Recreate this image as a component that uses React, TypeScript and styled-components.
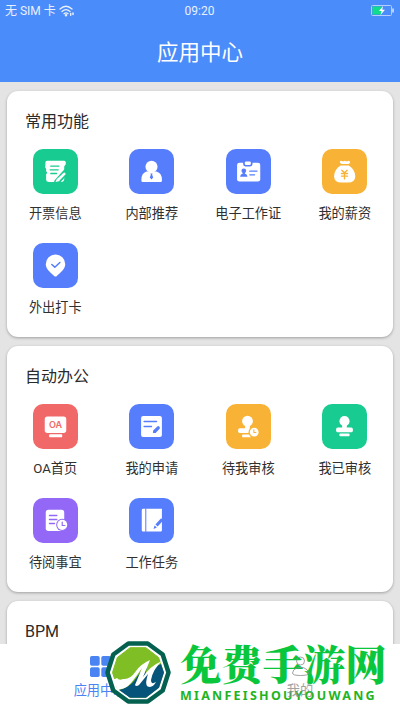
import React from 'react';
import styled, { createGlobalStyle } from 'styled-components';

const blue = '#567dfb';
const green = '#18cb90';
const orange = '#f8b336';
const red = '#f16868';
const purple = '#9468f7';

const GlobalStyle = createGlobalStyle`
  * {
    box-sizing: border-box;
  }
  body {
    margin: 0;
    background: #e4e4e4;
    font-family: Roboto, "Noto Sans CJK SC", sans-serif;
    color: #303030;
  }
`;

const Page = styled.div`
  position: relative;
  display: flex;
  flex-direction: column;
  height: 711px;
  overflow: hidden;
`;

const Header = styled.header`
  flex: none;
  height: 82px;
  background: #4a8cf9;
  color: #fff;
`;

const StatusBar = styled.div`
  display: grid;
  grid-template-columns: 1fr auto 1fr;
  align-items: center;
  height: 22px;
  padding: 0 6px 0 5px;
  font-size: 12px;
  line-height: 22px;
  color: #e8f0ff;
`;

const Carrier = styled.div`
  display: flex;
  align-items: center;
  gap: 3px;
  white-space: nowrap;
`;

const Battery = styled.svg`
  justify-self: end;
  margin-bottom: 2px;
`;

const HeaderTitle = styled.h1`
  margin: 0;
  padding-top: 1px;
  font-size: 21.5px;
  font-weight: 400;
  line-height: 60px;
  text-align: center;
`;

const Content = styled.main`
  flex: 1;
  min-height: 0;
  display: flex;
  flex-direction: column;
  gap: 9px;
  padding: 9px 7px 0;
  overflow: hidden;
`;

const Card = styled.section`
  flex: none;
  height: 246px;
  border-radius: 11px;
  background: #fff;
  box-shadow: 0 1px 3px rgba(0, 0, 0, 0.3);
`;

const CardTitle = styled.h2`
  margin: 0;
  padding: 19px 18px 0;
  font-size: 16px;
  font-weight: 400;
  line-height: 24px;
  color: #2b2b2b;
`;

const Grid = styled.div`
  display: grid;
  grid-template-columns: repeat(4, 1fr);
  grid-auto-rows: 94px;
  padding-top: 15px;
`;

const Item = styled.div`
  display: flex;
  flex-direction: column;
  align-items: center;
`;

const Tile = styled.div<{ $color: string }>`
  width: 45px;
  height: 45px;
  border-radius: 10px;
  background: ${(props) => props.$color};
  color: ${(props) => props.$color};

  svg {
    display: block;
    width: 100%;
    height: 100%;
  }
`;

const Label = styled.span`
  margin-top: 9px;
  font-size: 13.2px;
  line-height: 21px;
  white-space: nowrap;
`;

const TabBar = styled.nav`
  flex: none;
  display: grid;
  grid-template-columns: 1fr 1fr;
  height: 67px;
  background: #fff;
`;

const Tab = styled.div<{ $active?: boolean }>`
  display: flex;
  flex-direction: column;
  align-items: center;
  padding-top: 12px;
  font-size: 13.2px;
  line-height: 20px;
  color: ${(props) => (props.$active ? '#4a84f3' : '#8c8c8c')};
  z-index: ${(props) => (props.$active ? 0 : 2)};
  opacity: ${(props) => (props.$active ? 1 : 0.8)};

  svg {
    display: block;
    margin-bottom: 4px;
  }
`;

const Stamp = styled.div`
  position: absolute;
  left: 104px;
  bottom: 5px;
  z-index: 1;
  display: flex;
  align-items: center;
  gap: 8px;
`;

const StampText = styled.div`
  display: flex;
  flex-direction: column;
  color: #0ac63c;
  white-space: nowrap;
`;

const StampName = styled.span`
  font-family: "Noto Serif CJK SC", "Noto Sans CJK SC", serif;
  font-size: 41.3px;
  font-weight: 900;
  line-height: 44px;
  margin-top: -3px;
`;

const StampUrl = styled.span`
  padding: 4px 0 0 0;
  font-family: "Noto Sans", sans-serif;
  font-size: 12.5px;
  font-weight: 700;
  line-height: 16px;
  letter-spacing: 2.25px;
  color: #22b422;
`;

type GlyphProps = { children: React.ReactNode };

// white shapes on the tile, currentColor is the tile colour for cut-outs
const Glyph = ({ children }: GlyphProps) => (
  <svg viewBox="0 0 134 134" fill="#fff" strokeLinecap="round" strokeLinejoin="round">
    {children}
  </svg>
);

const InvoiceIcon = () => (
  <Glyph>
    <path d="M42 35H93Q98 36 98 42Q98 48 93 51V90Q92 98 84 98H48Q39 98 39 90V75Q45 71 39 66V59Q34 54 37 49V40Q37 35 42 35Z" />
    <path d="M53 51H77M51 62H75M53 73H70" stroke="currentColor" strokeWidth="4" fill="none" />
    <path d="M98 68L72 97" stroke="currentColor" strokeWidth="17" fill="none" />
    <path d="M93 74L76 91" stroke="#fff" strokeWidth="8" fill="none" />
    <path d="M67 98L72 87L80 95Z" />
  </Glyph>
);

const PersonIcon = () => (
  <Glyph>
    <circle cx="67" cy="53" r="18" />
    <path d="M52 67H82Q98 72 98 91V95Q98 98 94 98H41Q37 98 37 95V91Q37 72 52 67Z" />
    <path d="M64 73H70L69 77L72 85L67 91L62 85L65 77Z" fill="currentColor" />
  </Glyph>
);

const BadgeIcon = () => (
  <Glyph>
    <rect x="33" y="41" width="69" height="56" rx="7" />
    <path d="M51 36V45Q51 52 58 52H72Q79 52 79 45V36Z" fill="currentColor" />
    <rect x="56" y="37" width="18" height="11" rx="4" />
    <circle cx="53" cy="65" r="7" fill="currentColor" />
    <path d="M50 67H56V73Q64 75 64 83H42Q42 75 50 73Z" fill="currentColor" />
    <path d="M71 66H92M71 77H85" stroke="currentColor" strokeWidth="4" />
  </Glyph>
);

const MoneyIcon = () => (
  <Glyph>
    <path d="M57 35Q62 38 67 35Q74 38 80 35Q84 36 84 41Q82 45 76 45H59Q53 44 53 39Q54 35 57 35Z" />
    <path d="M55 49H80Q99 62 99 81Q99 100 77 100H58Q36 100 36 81Q36 62 55 49Z" />
    <path d="M59 63L67 71L75 63M67 71V89M58 73H76M58 81H76" stroke="currentColor" strokeWidth="4" fill="none" />
  </Glyph>
);

const PinIcon = () => (
  <Glyph>
    <path d="M67 34A29 29 0 0 1 96 63C96 76 83 87 71 98Q67 102 63 98C51 87 38 76 38 63A29 29 0 0 1 67 34Z" />
    <path d="M56 64L65 72L80 58" stroke="currentColor" strokeWidth="4.5" fill="none" />
  </Glyph>
);

const OaIcon = () => (
  <Glyph>
    <rect x="35" y="37" width="64" height="49" rx="8" />
    <rect x="48" y="90" width="39" height="9" rx="2" />
    <text
      x="67"
      y="71"
      textAnchor="middle"
      fontFamily="Inter, sans-serif"
      fontSize="27"
      fontWeight="600"
      fill="currentColor"
    >
      OA
    </text>
  </Glyph>
);

const ApplyIcon = () => (
  <Glyph>
    <rect x="36" y="36" width="62" height="62" rx="6" />
    <path d="M45 52H82M45 67H67" stroke="currentColor" strokeWidth="4" />
    <path d="M87 71L77 81" stroke="currentColor" strokeWidth="10" />
    <path d="M71 87L73 78L80 85Z" fill="currentColor" />
  </Glyph>
);

const PendingIcon = () => (
  <Glyph>
    <circle cx="64" cy="51" r="16" />
    <path d="M57 60H71V72H86V86H40Q36 86 36 82V77Q36 72 41 72H57Z" />
    <rect x="48" y="91" width="28" height="8" rx="2" />
    <circle cx="84" cy="84" r="17" fill="currentColor" />
    <circle cx="84" cy="84" r="13" />
    <path d="M83 77V85H89" stroke="currentColor" strokeWidth="3" fill="none" />
  </Glyph>
);

const ReviewedIcon = () => (
  <Glyph>
    <circle cx="67" cy="51" r="15" />
    <path d="M60 60H74V70H87Q92 70 92 75V80Q92 84 88 84H46Q42 84 42 80V75Q42 70 47 70H60Z" />
    <rect x="52" y="88" width="30" height="8" rx="2" />
  </Glyph>
);

const ReadingIcon = () => (
  <Glyph>
    <rect x="38" y="35" width="55" height="63" rx="8" />
    <path d="M49 52H71M49 64H71M49 76H64" stroke="currentColor" strokeWidth="4" />
    <circle cx="87" cy="80" r="18" fill="currentColor" />
    <circle cx="87" cy="80" r="15" />
    <path d="M87 72V82H95" stroke="currentColor" strokeWidth="3.5" fill="none" />
  </Glyph>
);

const TaskIcon = () => (
  <Glyph>
    <path d="M42 32H98V97Q98 100 94 100H42Q38 100 38 96V36Q38 32 42 32Z" />
    <path d="M50 32V100" stroke="currentColor" strokeWidth="3" />
    <path d="M99 63L82 82" stroke="currentColor" strokeWidth="9" strokeLinecap="butt" />
    <path d="M73 92L76 82L83 88Z" fill="currentColor" />
  </Glyph>
);

type AppItem = { label: string; color: string; icon: React.ReactNode };

const commonApps: AppItem[] = [
  { label: '开票信息', color: green, icon: <InvoiceIcon /> },
  { label: '内部推荐', color: blue, icon: <PersonIcon /> },
  { label: '电子工作证', color: blue, icon: <BadgeIcon /> },
  { label: '我的薪资', color: orange, icon: <MoneyIcon /> },
  { label: '外出打卡', color: blue, icon: <PinIcon /> },
];

const officeApps: AppItem[] = [
  { label: 'OA首页', color: red, icon: <OaIcon /> },
  { label: '我的申请', color: blue, icon: <ApplyIcon /> },
  { label: '待我审核', color: orange, icon: <PendingIcon /> },
  { label: '我已审核', color: green, icon: <ReviewedIcon /> },
  { label: '待阅事宜', color: purple, icon: <ReadingIcon /> },
  { label: '工作任务', color: blue, icon: <TaskIcon /> },
];

type AppCardProps = { title: string; items: AppItem[] };

const AppCard = ({ title, items }: AppCardProps) => (
  <Card>
    <CardTitle>{title}</CardTitle>
    <Grid>
      {items.map((item) => (
        <Item key={item.label}>
          <Tile $color={item.color}>{item.icon}</Tile>
          <Label>{item.label}</Label>
        </Item>
      ))}
    </Grid>
  </Card>
);

const WifiIcon = () => (
  <svg width="16" height="12" viewBox="0 0 16 12" fill="none" stroke="#e8f0ff" strokeWidth="1.3" strokeLinecap="round">
    <path d="M1 4Q7 -1.5 13 4M3 6.5Q7 2.8 11 6.5M5 8.7Q7 7 9 8.7" />
    <circle cx="7" cy="10.3" r="0.6" fill="#e8f0ff" />
    <path d="M11.7 8.5V10.3M14 8V9.5" strokeWidth="1.5" />
  </svg>
);

const BatteryIcon = () => (
  <Battery width="23" height="11" viewBox="0 0 23 11">
    <rect x="0.5" y="0.5" width="20" height="10" rx="1" fill="none" stroke="#b4cffd" />
    <rect x="1.5" y="1.5" width="9" height="8" fill="#10dc8c" />
    <path d="M22 3.5V7.5" stroke="#d8e6ff" strokeWidth="1.5" />
    <path d="M12 1L8 6H10.5L9.5 10L14 4.7H11.3Z" fill="#fff" />
  </Battery>
);

const Emblem = () => (
  <svg width="68" height="66" viewBox="0 0 68 66">
    <path
      d="M64.500 32.500L58.700 50.500L43.700 61.500H24.300L9.300 50.500L3.500 32.500L9.300 14.500L24.300 3.500H43.700L58.700 14.500Z"
      fill="#fff"
      stroke="#04604f"
      strokeWidth="4.5"
      strokeLinejoin="round"
    />
    <path
      d="M59.500 32.500L54.600 47.500L41.900 57.300H26.100L13.400 47.500L8.500 32.500L13.400 17.500L26.100 7.700H41.900L54.600 17.500Z"
      fill="#7fbe25"
      stroke="#7fbe25"
      strokeLinejoin="round"
    />
    <path d="M57 24L60 32.500L55 47.800L42 57.800H26L15 50Q24 48 30 41L44 22L41 36Q49 27 57 24Z" fill="#07547a" />
    <path d="M8 38Q10 40 13 38Q15 41 19 39Q26 40 32 31Q37 24 46 20Q43 28 39 37Q46 26 58 21Q49 29 47 40Q47 45 52 42Q48 49 43 46Q41 43 44 34L35 45Q32 47 31 45L38 28Q32 37 27 43Q21 50 14 49Q10 44 8 38Z" fill="#fff" />
  </svg>
);

const GridIcon = () => (
  <svg width="21" height="21" viewBox="0 0 21 21" fill="#4a84f3">
    <rect x="0" y="0" width="9.7" height="9.7" rx="1.8" />
    <rect x="11.3" y="0" width="9.7" height="9.7" rx="1.8" />
    <rect x="0" y="11.3" width="9.7" height="9.7" rx="1.8" />
    <rect x="11.3" y="11.3" width="9.7" height="9.7" rx="1.8" />
  </svg>
);

const UserIcon = () => (
  <svg width="21" height="21" viewBox="0 0 21 21" fill="none" stroke="#8c8c8c" strokeWidth="1">
    <circle cx="10.5" cy="5" r="4" />
    <path d="M7.5 11.5H13.5Q18.5 13.5 18.5 17Q18.5 19.5 10.5 19.5Q2.5 19.5 2.5 17Q2.5 13.5 7.5 11.5Z" />
  </svg>
);

const App = () => {
  return (
    <>
      <GlobalStyle />
      <Page>
        <Header>
          <StatusBar>
            <Carrier>
              <span>无 SIM 卡</span>
              <WifiIcon />
            </Carrier>
            <span>09:20</span>
            <BatteryIcon />
          </StatusBar>
          <HeaderTitle>应用中心</HeaderTitle>
        </Header>
        <Content>
          <AppCard title="常用功能" items={commonApps} />
          <AppCard title="自动办公" items={officeApps} />
          <AppCard title="BPM" items={[]} />
        </Content>
        <TabBar>
          <Tab $active>
            <GridIcon />
            应用中心
          </Tab>
          <Tab>
            <UserIcon />
            我的
          </Tab>
        </TabBar>
        <Stamp>
          <Emblem />
          <StampText>
            <StampName>免费手游网</StampName>
            <StampUrl>MIANFEISHOUYOUWANG</StampUrl>
          </StampText>
        </Stamp>
      </Page>
    </>
  );
};

export default App;
